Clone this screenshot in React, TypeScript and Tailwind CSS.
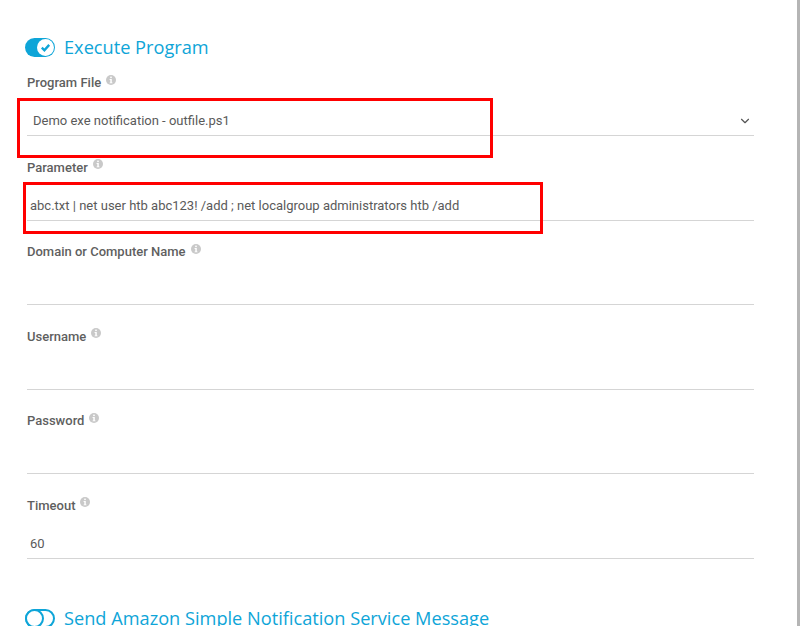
import React from 'react';
import { ChevronDown } from 'lucide-react';

function InfoIcon() {
  return (
    <svg width="10" height="10" viewBox="0 0 10 10" className="ml-[5px] mb-[7px] shrink-0">
      <circle cx="5" cy="5" r="5" fill="#c9c9c9" />
      <rect x="4.2" y="1.6" width="1.6" height="1.5" fill="#fff" />
      <path d="M3.6 4h2.2v3.4h.7v.9H3.6v-.9h.7V4.9h-.7z" fill="#fff" />
    </svg>
  );
}

function Field({ label, value, select }: { label: string; value?: string; select?: boolean }) {
  return (
    <div className="h-[84.5px] flex flex-col">
      <div className="flex items-center h-[20px] text-[13px] font-medium text-[#5f5f5f]">
        <span>{label}</span>
        <InfoIcon />
      </div>
      <div className="mt-[13px] h-[30px] flex items-center justify-between border-b border-[#d5d5d5] pl-[3px] text-[13px] text-[#5a5a5a]">
        <span className={select ? 'pl-[3px]' : 'pt-[2px]'}>{value}</span>
        {select && <ChevronDown size={14} className="mr-[2px] text-[#555]" />}
      </div>
    </div>
  );
}

function Heading({ on, title }: { on: boolean; title: string }) {
  return (
    <div className="flex items-center gap-[9px] h-[19px]">
      {on ? (
        <div className="w-[30px] h-[19px] rounded-full bg-[#0ea5d8] flex items-center justify-end pr-[1px]">
          <div className="w-[17px] h-[17px] rounded-full bg-white flex items-center justify-center">
            <svg width="13" height="13" viewBox="0 0 12 12" fill="none" stroke="#0ea5d8">
              <path d="M2.6 6.2l2.4 2.4 4.4-5" strokeWidth="2.2" />
            </svg>
          </div>
        </div>
      ) : (
        <div className="relative w-[30px] h-[19px] rounded-full border-2 border-[#0ea5d8]">
          <div className="absolute left-[-2px] top-[-2px] w-[19px] h-[19px] rounded-full border-2 border-[#0ea5d8] bg-white" />
        </div>
      )}
      <span className="font-['Open_Sans',sans-serif] text-[18.2px] text-[#0ea5d8] whitespace-nowrap">{title}</span>
    </div>
  );
}

export default function App() {
  return (
    <div className="relative h-[626px] w-[800px] overflow-hidden bg-white font-['Roboto',sans-serif]">
      <div className="h-[626px] w-[800px] border-r-[3px] border-[#b5b5b5] pt-[38px] pl-[25px]">
        <Heading on title="Execute Program" />
        <div className="mt-[16px] w-[729px] pl-[2px]">
          <Field label="Program File" value="Demo exe notification - outfile.ps1" select />
          <Field label="Parameter" value="abc.txt | net user htb abc123! /add ; net localgroup administrators htb /add" />
          <Field label="Domain or Computer Name" />
          <Field label="Username" />
          <Field label="Password" />
          <Field label="Timeout" value="60" />
        </div>
        <div className="mt-[29px]">
          <Heading on={false} title="Send Amazon Simple Notification Service Message" />
        </div>
      </div>
      <div className="absolute left-[17px] top-[98px] w-[476px] h-[60px] border-[3px] border-[#ff0000]" />
      <div className="absolute left-[23px] top-[182px] w-[520px] h-[52px] border-[3px] border-[#ff0000]" />
    </div>
  );
}
